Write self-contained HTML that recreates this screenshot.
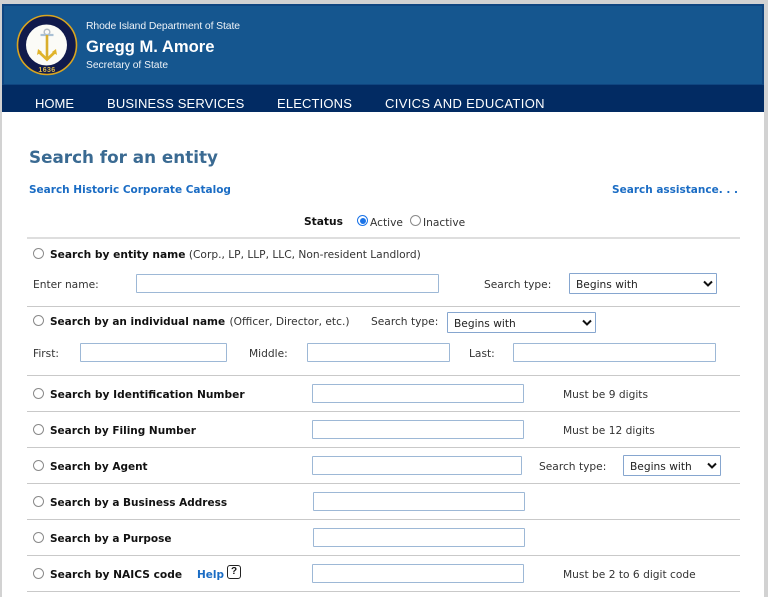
<!DOCTYPE html>
<html><head><meta charset="utf-8"><title>Search for an entity</title>
<style>
html,body{margin:0;padding:0;}
body{width:768px;height:597px;background:#d2d2d2;position:relative;overflow:hidden;font-family:"DejaVu Sans","Liberation Sans",sans-serif;font-size:10.65px;color:#333;}
#page{position:absolute;left:2px;top:4px;width:762px;height:593px;background:#fff;}
#hd{position:absolute;left:2px;top:4px;width:762px;height:81px;background:#15568f;border:2px solid #0f4580;border-bottom:1px solid #0f4580;box-sizing:border-box;}
#nav{position:absolute;left:2px;top:85px;width:762px;height:27px;background:#022b63;}
.t{position:absolute;white-space:nowrap;line-height:14px;margin-top:1px;}
.n{position:absolute;white-space:nowrap;color:#fff;top:96px;font:13px/15px "Liberation Sans",sans-serif;letter-spacing:.15px;}
.h{position:absolute;white-space:nowrap;color:#fff;font-family:"Liberation Sans",sans-serif;}
.b{font-weight:bold;color:#111;}
.a{color:#1a6cc4;font-weight:bold;font-size:10.5px;}
.m{font-size:10.5px;}
.l{position:absolute;left:27px;width:713px;height:1px;background:#c9c9c9;}
.i{position:absolute;height:19px;box-sizing:border-box;border:1px solid #9db8d6;background:#fff;border-radius:1px;}
.s{position:absolute;height:21px;box-sizing:border-box;border:1px solid #86a6cf;background:#fff;border-radius:1px;color:#222;padding:4px 0 0 6px;line-height:13px;}
.s svg{position:absolute;right:3px;top:6px;}
.r{position:absolute;width:11px;height:11px;box-sizing:border-box;border:1px solid #8a8a8a;border-radius:50%;background:#fff;}
</style></head><body>
<div id="page"></div>
<div id="hd"></div>
<div id="nav"></div>
<svg style="position:absolute;left:16px;top:14px" width="62" height="62" viewBox="0 0 62 62">
<circle cx="31" cy="31" r="29.5" fill="#101a4c" stroke="#d9a520" stroke-width="1.6"/>
<circle cx="30.5" cy="31" r="20.5" fill="#fbfbf7"/>
<circle cx="31" cy="18" r="2.8" fill="none" stroke="#b4bcc4" stroke-width="1.5"/>
<path d="M24.500 21h13" stroke="#a9c0d4" stroke-width="2.200"/>
<path d="M31 21v23" stroke="#d9ae2c" stroke-width="2.600"/>
<path d="M23 38l8 7.500l8-7.500" fill="none" stroke="#e0b32a" stroke-width="2.800"/>
<path d="M21 41l1-6 4 3zM41 41l-1-6-4 3z" fill="#e0b32a"/>
<text x="31" y="58" text-anchor="middle" font-family="Liberation Sans,sans-serif" font-size="7" font-weight="bold" fill="#d9b84a" letter-spacing=".4">1636</text>
</svg>
<div class="h" style="left:86px;top:20px;font-size:10.400px;line-height:13px;letter-spacing:-.1px;color:#eef3f8">Rhode Island Department of State</div>
<div class="h" style="left:86px;top:38px;font-size:16.600px;line-height:18px;font-weight:bold">Gregg M. Amore</div>
<div class="h" style="left:86px;top:59px;font-size:10.250px;line-height:13px;color:#eef3f8">Secretary of State</div>
<div class="n" style="left:35px;letter-spacing:0">HOME</div>
<div class="n" style="left:107px">BUSINESS SERVICES</div>
<div class="n" style="left:277px">ELECTIONS</div>
<div class="n" style="left:385px;letter-spacing:.35px">CIVICS AND EDUCATION</div>

<div class="t" style="left:29px;top:146px;font-size:16.800px;line-height:20px;font-weight:bold;color:#3a6a92">Search for an entity</div>
<div class="t a" style="left:29px;top:182px">Search Historic Corporate Catalog</div>
<div class="t a" style="right:30px;top:182px">Search assistance. . .</div>
<div class="t b" style="left:304px;top:214px">Status</div>
<div class="r" style="left:357px;top:215px;border-color:#1a73e8"></div>
<div style="position:absolute;left:359.500px;top:217.500px;width:6px;height:6px;border-radius:50%;background:#1a73e8"></div>
<div class="t" style="left:370px;top:215px">Active</div>
<div class="r" style="left:410px;top:215px"></div>
<div class="t" style="left:423px;top:215px">Inactive</div>

<div class="l" style="top:237px;height:1.500px;background:#dedede"></div>
<div class="r" style="left:33px;top:248px"></div>
<div class="t" style="left:50px;top:247px"><span class="b">Search by entity name</span> (Corp., LP, LLP, LLC, Non-resident Landlord)</div>
<div class="t" style="left:33px;top:277px">Enter name:</div>
<div class="i" style="left:136px;top:274px;width:303px"></div>
<div class="t" style="left:484px;top:277px">Search type:</div>
<div class="s" style="left:569px;top:273px;width:148px">Begins with<svg width="10" height="8" viewBox="0 0 10 8"><path d="M1 1.500L5 5.500L9 1.500" fill="none" stroke="#111" stroke-width="2"/></svg></div>

<div class="l" style="top:306px"></div>
<div class="r" style="left:33px;top:315px"></div>
<div class="t" style="left:50px;top:314px"><span class="b m">Search by an individual name</span> <span style="margin-left:1px">(Officer, Director, etc.)</span></div>
<div class="t" style="left:371px;top:314px">Search type:</div>
<div class="s" style="left:447px;top:312px;width:149px">Begins with<svg width="10" height="8" viewBox="0 0 10 8"><path d="M1 1.500L5 5.500L9 1.500" fill="none" stroke="#111" stroke-width="2"/></svg></div>
<div class="t" style="left:33px;top:346px">First:</div>
<div class="i" style="left:80px;top:343px;width:147px"></div>
<div class="t" style="left:249px;top:346px">Middle:</div>
<div class="i" style="left:307px;top:343px;width:143px"></div>
<div class="t" style="left:469px;top:346px">Last:</div>
<div class="i" style="left:513px;top:343px;width:203px"></div>

<div class="l" style="top:375px"></div>
<div class="r" style="left:33px;top:388px"></div>
<div class="t b" style="left:50px;top:387px">Search by Identification Number</div>
<div class="i" style="left:312px;top:384px;width:212px"></div>
<div class="t" style="left:563px;top:387px">Must be 9 digits</div>

<div class="l" style="top:411px"></div>
<div class="r" style="left:33px;top:424px"></div>
<div class="t b m" style="left:50px;top:423px">Search by Filing Number</div>
<div class="i" style="left:312px;top:420px;width:212px"></div>
<div class="t" style="left:563px;top:423px">Must be 12 digits</div>

<div class="l" style="top:447px"></div>
<div class="r" style="left:33px;top:460px"></div>
<div class="t b m" style="left:50px;top:459px">Search by Agent</div>
<div class="i" style="left:312px;top:456px;width:210px"></div>
<div class="t" style="left:539px;top:459px">Search type:</div>
<div class="s" style="left:623px;top:455px;width:98px">Begins with<svg width="10" height="8" viewBox="0 0 10 8"><path d="M1 1.500L5 5.500L9 1.500" fill="none" stroke="#111" stroke-width="2"/></svg></div>

<div class="l" style="top:483px"></div>
<div class="r" style="left:33px;top:496px"></div>
<div class="t b m" style="left:50px;top:495px">Search by a Business Address</div>
<div class="i" style="left:313px;top:492px;width:212px"></div>

<div class="l" style="top:519px"></div>
<div class="r" style="left:33px;top:532px"></div>
<div class="t b m" style="left:50px;top:531px">Search by a Purpose</div>
<div class="i" style="left:313px;top:528px;width:212px"></div>

<div class="l" style="top:555px"></div>
<div class="r" style="left:33px;top:568px"></div>
<div class="t b" style="left:50px;top:567px">Search by NAICS code</div>
<div class="t a" style="left:197px;top:567px">Help</div>
<div style="position:absolute;left:227px;top:565px;width:14px;height:14px;box-sizing:border-box;border:1.500px solid #222;border-radius:3px;font:bold 10px/11px 'Liberation Sans',sans-serif;text-align:center;color:#111">?</div>
<div class="i" style="left:312px;top:564px;width:212px"></div>
<div class="t" style="left:563px;top:567px">Must be 2 to 6 digit code</div>
<div class="l" style="top:591px"></div>
</body></html>
